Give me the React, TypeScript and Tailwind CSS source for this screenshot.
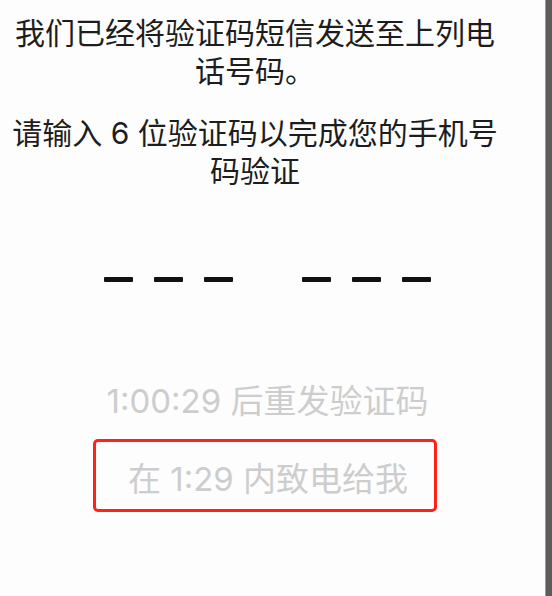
import React from "react";

const Dash = () => <div className="w-[29px] h-[5px] bg-[#111111] rounded-[1px]" />;

const DashGroup = () => (
  <div className="flex gap-[21px]">
    <Dash />
    <Dash />
    <Dash />
  </div>
);

export default function App() {
  return (
    <div
      className="flex w-[552px] h-[596px] bg-[#fdfdfd] overflow-hidden"
      style={{ fontFamily: 'Inter, "Noto Sans CJK SC", sans-serif' }}
    >
      <div className="w-[545px] h-full flex flex-col">
        <div className="ml-[10px] w-[490px] pt-[14px] text-center text-[30px] leading-[38px] text-[#1d1d1d]">
          <p>我们已经将验证码短信发送至上列电话号码。</p>
          <p className="mt-[24px]">请输入 6 位验证码以完成您的手机号码验证</p>
        </div>
        <div className="w-[535px] flex flex-col">
          <div className="mt-[87px] flex justify-center gap-[69px]">
            <DashGroup />
            <DashGroup />
          </div>
          <div className="mt-[99px] text-center text-[33px] leading-[40px] text-[#cdcdcd]">
            1:00:29 后重发验证码
          </div>
          <div className="mt-[18px] ml-[93px] w-[344px] h-[73px] border-[3px] border-[#ff2218] rounded-[5px] flex items-center justify-center pl-[6px] pt-[6px]">
            <span className="text-[33px] leading-[40px] text-[#cdcdcd]">在 1:29 内致电给我</span>
          </div>
        </div>
      </div>
      <div className="w-[7px] h-full bg-[#5c5c5c] border-l border-[#9a9a9a]" />
    </div>
  );
}
